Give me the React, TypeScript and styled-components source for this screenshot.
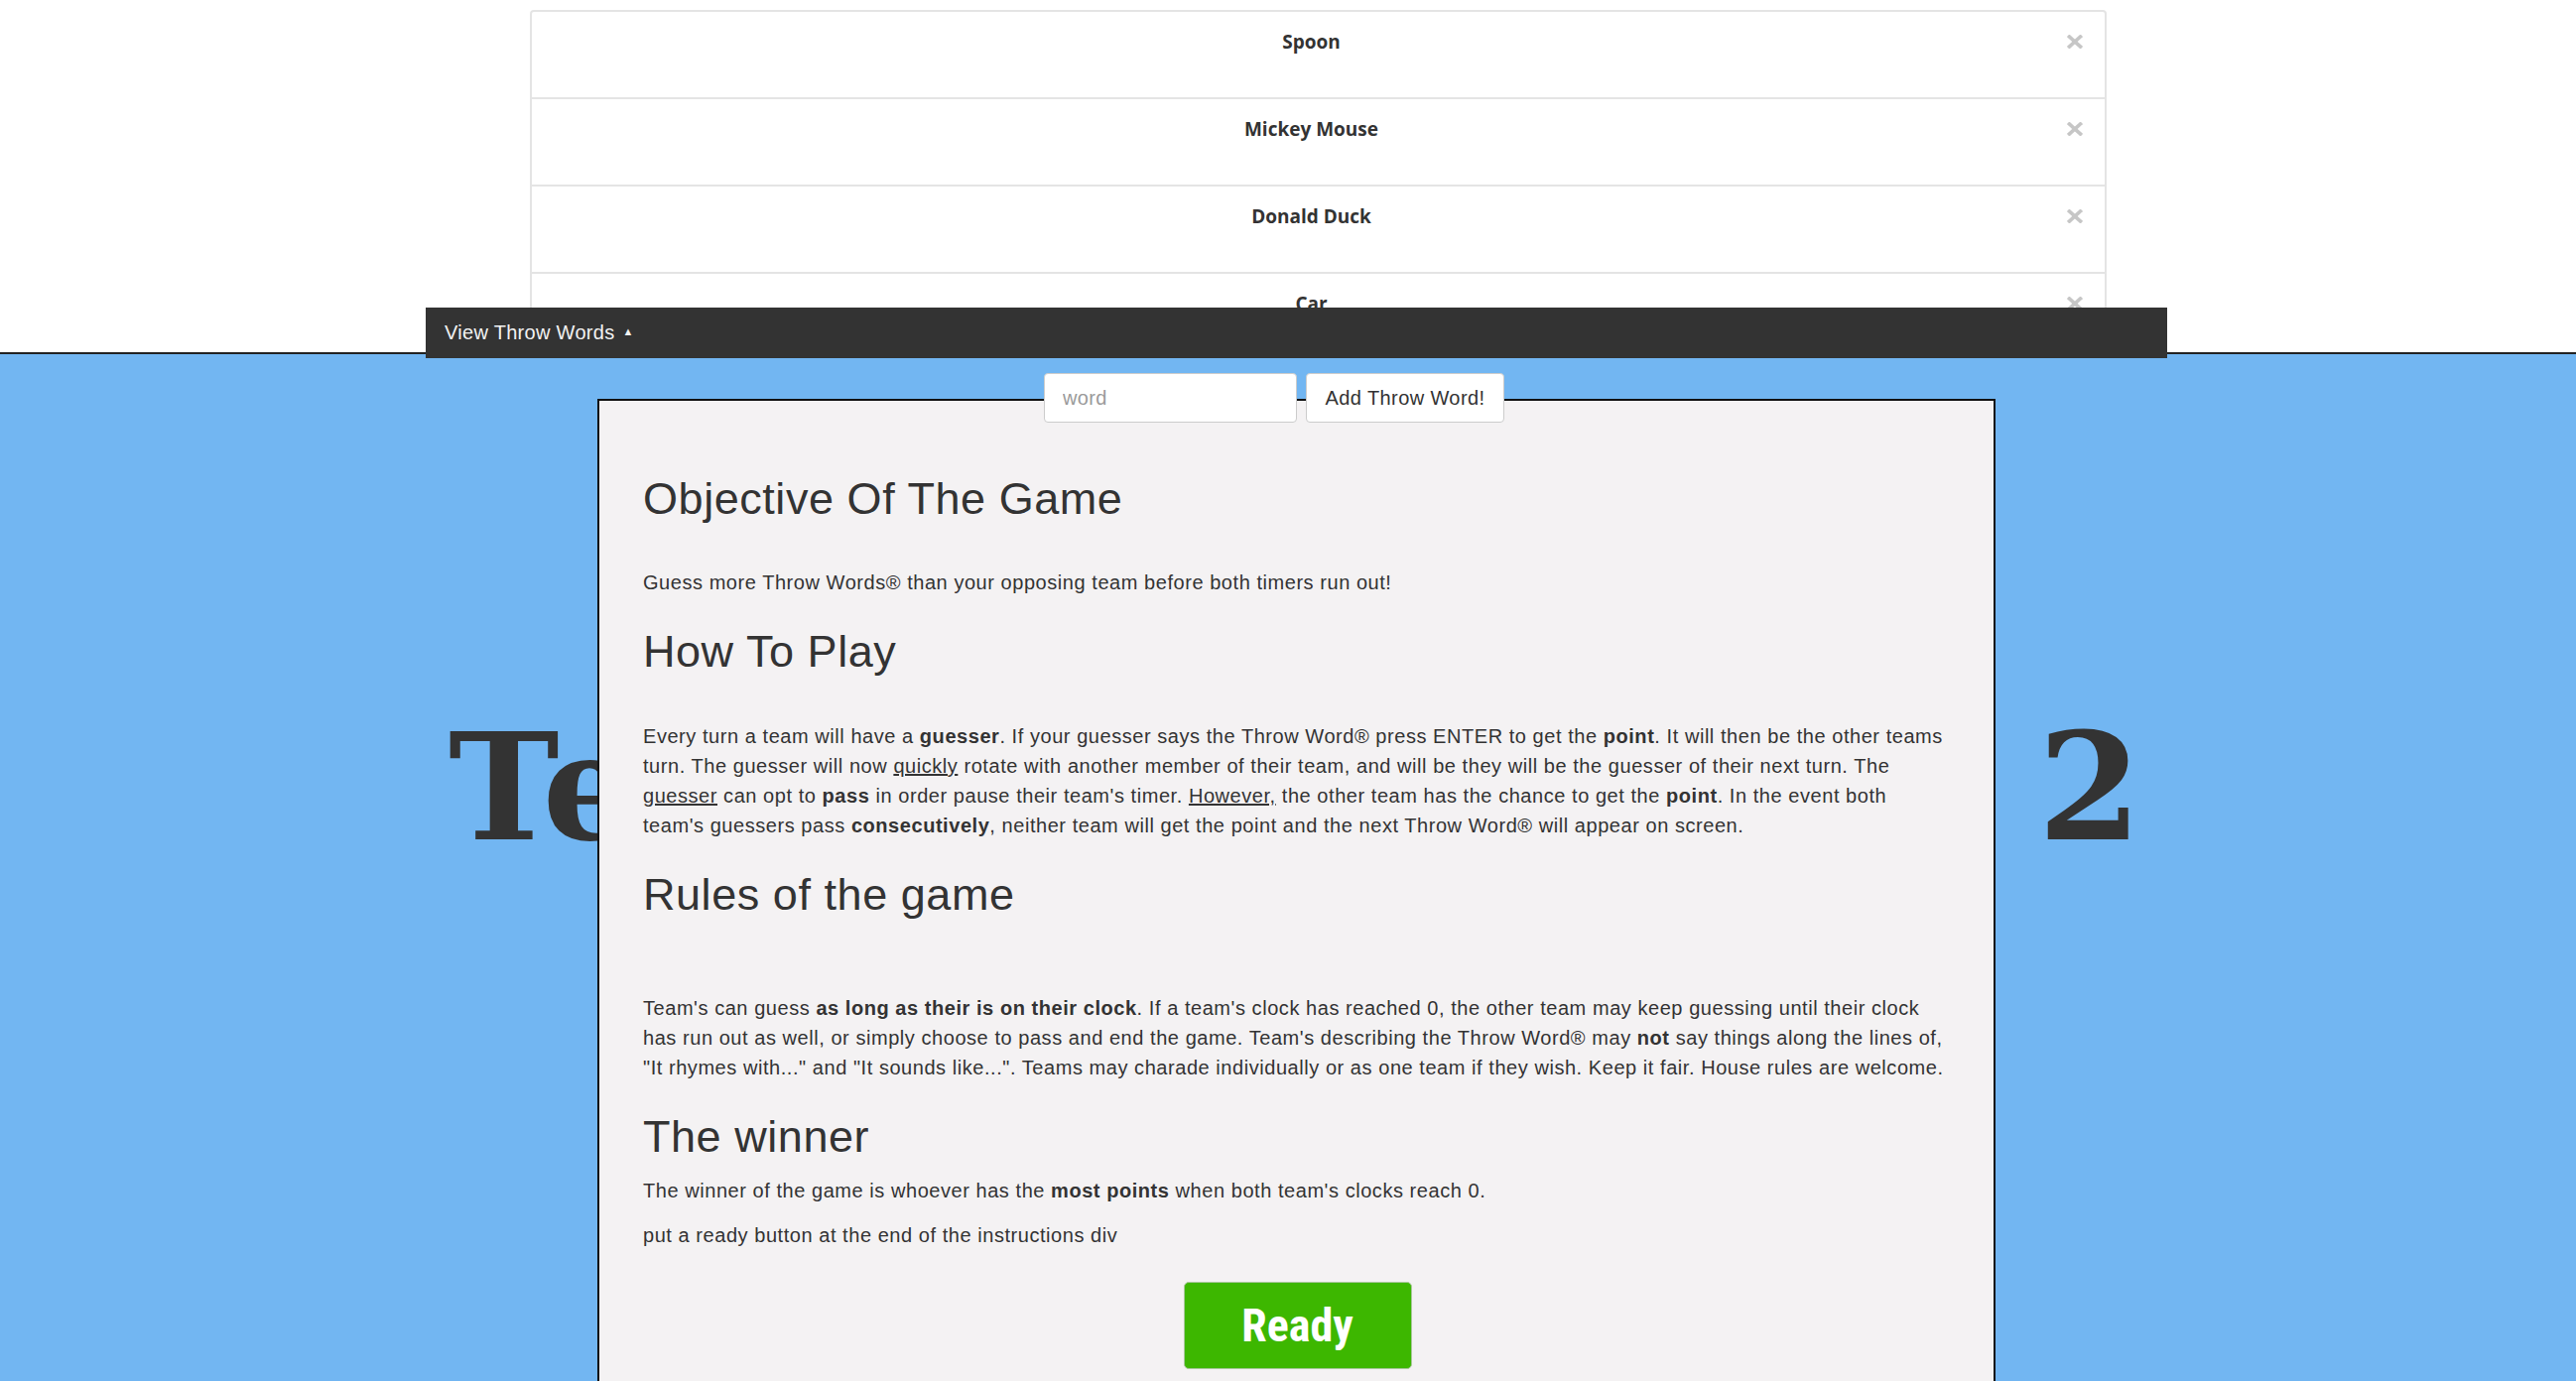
import styled, { createGlobalStyle } from "styled-components";

const GlobalStyle = createGlobalStyle`
  html, body {
    margin: 0;
    padding: 0;
    background: #fff;
    font-family: "Liberation Sans", Arial, Helvetica, sans-serif;
    color: #333;
  }
  * { box-sizing: border-box; }
`;

const words = ["Spoon", "Mickey Mouse", "Donald Duck", "Car", "Pizza"];

// 위쪽 단어 목록 영역
function WordDrawer() {
  return (
    <Drawer>
      <WordList>
        {words.map((w) => (
          <WordRow key={w}>
            <WordText>{w}</WordText>
            <CloseMark viewBox="0 0 16 14" aria-label="remove">
              <line x1="2.5" y1="2" x2="13.5" y2="12" />
              <line x1="13.5" y1="2" x2="2.5" y2="12" />
            </CloseMark>
          </WordRow>
        ))}
      </WordList>
      <DrawerToggle>
        View Throw Words <Caret>▲</Caret>
      </DrawerToggle>
    </Drawer>
  );
}

// 게임 설명 패널
function Instructions() {
  return (
    <Panel>
      <Heading $after={44}>Objective Of The Game</Heading>
      <Para>Guess more Throw Words® than your opposing team before both timers run out!</Para>

      <Heading $after={45}>How To Play</Heading>
      <Para>
        Every turn a team will have a <b>guesser</b>. If your guesser says the Throw Word® press ENTER to get
        the <b>point</b>. It will then be the other teams turn. The guesser will now <u>quickly</u> rotate with
        another member of their team, and will be they will be the guesser of their next turn. The{" "}
        <u>guesser</u> can opt to <b>pass</b> in order pause their team's timer. <u>However,</u> the other team
        has the chance to get the <b>point</b>. In the event both team's guessers pass <b>consecutively</b>,
        neither team will get the point and the next Throw Word® will appear on screen.
      </Para>

      <Heading $after={74}>Rules of the game</Heading>
      <Para>
        Team's can guess <b>as long as their is on their clock</b>. If a team's clock has reached 0, the other
        team may keep guessing until their clock has run out as well, or simply choose to pass and end the
        game. Team's describing the Throw Word® may <b>not</b> say things along the lines of, "It rhymes
        with..." and "It sounds like...". Teams may charade individually or as one team if they wish. Keep it
        fair. House rules are welcome.
      </Para>

      <Heading $after={14}>The winner</Heading>
      <Para>
        The winner of the game is whoever has the <b>most points</b> when both team's clocks reach 0.
      </Para>
      <Para>put a ready button at the end of the instructions div</Para>

      <ReadyRow>
        <ReadyButton>Ready</ReadyButton>
      </ReadyRow>
    </Panel>
  );
}

export default function App() {
  return (
    <>
      <GlobalStyle />
      <WordDrawer />
      <Stage>
        <AddForm>
          <WordInput placeholder="word" />
          <AddButton>Add Throw Word!</AddButton>
        </AddForm>
        <Scoreboard>
          <TeamName>Team 1</TeamName>
          <TeamName>Team 2</TeamName>
        </Scoreboard>
        <Instructions />
      </Stage>
    </>
  );
}

//CSS
const Drawer = styled.header`
  position: relative;
  height: 357px;
  border-bottom: 2px solid #222;
  background: #fff;
  z-index: 3;
`;

const WordList = styled.ul`
  list-style: none;
  margin: 0 0 0 534px;
  padding: 10px 0 0;
  width: 1589px;
  height: 355px;
  overflow: hidden;
`;

const WordRow = styled.li`
  display: flex;
  align-items: flex-start;
  height: 90px;
  margin-bottom: -2px;
  padding: 17px 22px 0 24px;
  border: 2px solid #e4e4e4;
  background: #fff;

  &:first-child {
    border-top-left-radius: 4px;
    border-top-right-radius: 4px;
  }
`;

const WordText = styled.span`
  flex: 1;
  text-align: center;
  font-family: "Open Sans", "Noto Sans", sans-serif;
  font-weight: 700;
  font-size: 19px;
  line-height: 26px;
  color: #333;
`;

const CloseMark = styled.svg`
  width: 16px;
  height: 14px;
  margin-top: 6px;
  stroke: #c6c6c6;
  stroke-width: 3.6;
  stroke-linecap: square;
`;

const DrawerToggle = styled.div`
  position: absolute;
  top: 310px;
  left: 429px;
  width: 1755px;
  height: 51px;
  display: flex;
  align-items: center;
  gap: 8px;
  padding-left: 19px;
  background: #333;
  color: #f2f2f2;
  font-size: 20px;
  letter-spacing: 0.3px;
`;

const Caret = styled.span`
  font-size: 11px;
  margin-top: -3px;
`;

const Stage = styled.main`
  position: relative;
  min-height: calc(100vh - 359px);
  background: #72b6f2;
  padding-top: 19px;
  overflow: hidden;
`;

const AddForm = styled.div`
  position: relative;
  z-index: 2;
  display: flex;
  justify-content: center;
  gap: 9px;
  padding-right: 28px;
`;

const WordInput = styled.input`
  width: 255px;
  height: 50px;
  padding: 0 18px;
  border: 1px solid #ccc;
  border-radius: 4px;
  background: #fff;
  font-family: "Liberation Sans", Arial, sans-serif;
  font-size: 20px;
  letter-spacing: 0.3px;
  color: #333;

  &::placeholder {
    color: #9a9a9a;
  }
`;

const AddButton = styled.button`
  width: 200px;
  height: 50px;
  padding: 0;
  border: 1px solid #ccc;
  border-radius: 4px;
  background: #fff;
  font-family: "Liberation Sans", Arial, sans-serif;
  font-size: 20px;
  color: #333;
  letter-spacing: 0.4px;
`;

const Scoreboard = styled.div`
  display: flex;
  justify-content: space-between;
  margin: 292px 438px 0 452px;
`;

const TeamName = styled.h1`
  margin: 0;
  font-family: "DejaVu Serif", "Liberation Serif", serif;
  font-weight: 700;
  font-size: 150px;
  line-height: 150px;
  color: #333;
`;

const Panel = styled.section`
  position: absolute;
  z-index: 1;
  top: 45px;
  left: 602px;
  width: 1409px;
  padding: 44px 44px 60px;
  background: #f4f2f3;
  border: 2px solid #111;
`;

const Heading = styled.h2<{ $after: number }>`
  margin: 30px 0 ${(p) => p.$after}px;
  font-size: 45px;
  font-weight: 400;
  line-height: 50px;
  color: #333;
  letter-spacing: 0.55px;
`;

const Para = styled.p`
  margin: 0 0 15px;
  font-size: 20px;
  line-height: 30px;
  letter-spacing: 0.55px;
  color: #333;

  b {
    font-weight: 700;
  }
`;

const ReadyRow = styled.div`
  display: flex;
  justify-content: center;
  padding-top: 17px;
  padding-left: 2px;
`;

const ReadyButton = styled.button`
  width: 230px;
  height: 88px;
  border: 1px solid #a9c79a;
  border-radius: 5px;
  background: #3db700;
  color: #fff;
  font-family: "Liberation Sans Narrow", "Roboto Condensed", "Liberation Sans", Arial, sans-serif;
  font-stretch: condensed;
  font-weight: 700;
  font-size: 46px;
`;
